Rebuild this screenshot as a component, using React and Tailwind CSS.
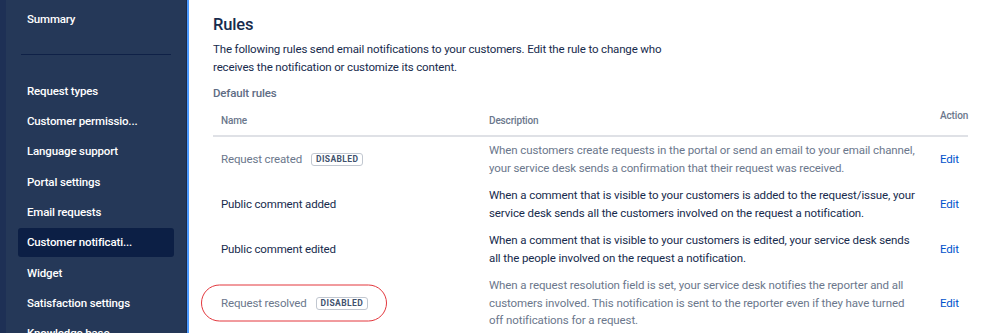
import React from "react";

const navItems = [
  { label: "Request types" },
  { label: "Customer permissio..." },
  { label: "Language support" },
  { label: "Portal settings" },
  { label: "Email requests" },
  { label: "Customer notificati...", active: true },
  { label: "Widget" },
  { label: "Satisfaction settings" },
  { label: "Knowledge base" },
];

const rules = [
  {
    name: "Request created",
    disabled: true,
    desc: "When customers create requests in the portal or send an email to your email channel, your service desk sends a confirmation that their request was received.",
  },
  {
    name: "Public comment added",
    desc: "When a comment that is visible to your customers is added to the request/issue, your service desk sends all the customers involved on the request a notification.",
  },
  {
    name: "Public comment edited",
    desc: "When a comment that is visible to your customers is edited, your service desk sends all the people involved on the request a notification.",
  },
  {
    name: "Request resolved",
    disabled: true,
    circled: true,
    desc: "When a request resolution field is set, your service desk notifies the reporter and all customers involved. This notification is sent to the reporter even if they have turned off notifications for a request.",
  },
];

const Badge = () => (
  <span className="ml-[9px] inline-flex h-[13px] items-center rounded-[3px] border border-[#c1c7d0] px-[4px] text-[8.5px] font-bold leading-none tracking-[0.4px] text-[#42526e]">
    DISABLED
  </span>
);

export default function App() {
  return (
    <div
      className="flex h-[333px] w-[998px] overflow-hidden bg-white tracking-[-0.15px]"
      style={{ fontFamily: 'Roboto, "Liberation Sans", Arial, sans-serif' }}
    >
      {/* Sidebar */}
      <div className="flex h-full shrink-0">
        <div className="w-[6px] bg-[#1e3055]" />
        <div className="w-[180px] bg-[#253858] pt-[10px]">
          <div className="px-[21px] text-[11.5px] font-medium leading-[18px] text-white">Summary</div>
          <div className="mx-[15px] mt-[26px] mb-[22px] h-px bg-[#0f2147]" />
          <div className="flex flex-col gap-[1.3px] px-[12px]">
            {navItems.map((item) => (
              <div
                key={item.label}
                className={`flex h-[29px] shrink-0 items-center rounded-[3px] px-[9px] text-[11.5px] font-medium text-white ${
                  item.active ? "bg-[#0c1f45]" : ""
                }`}
              >
                {item.label}
              </div>
            ))}
          </div>
        </div>
        <div className="w-px bg-[#1a2b4c]" />
        <div className="w-[2px] bg-[#4c9aff]" />
      </div>

      {/* Main */}
      <div className="flex-1 pl-[24px] pr-[38px] pt-[14px]">
        <h1 className="text-[16.5px] font-medium leading-[22px] text-[#172b4d]">Rules</h1>
        <p className="mt-[4px] w-[462px] text-[11.5px] leading-[18px] text-[#172b4d]">
          The following rules send email notifications to your customers. Edit the rule to change who receives the
          notification or customize its content.
        </p>
        <div className="mt-[8px] text-[11.5px] font-medium leading-[18px] text-[#5e6c84]">Default rules</div>

        <div className="mt-[3px]">
          <div className="flex h-[32px] border-b-2 border-[#dfe1e6] text-[10px] font-medium text-[#6b778c]">
            <div className="w-[276px] pl-[8px] pt-[8px]">Name</div>
            <div className="w-[451px] pt-[8px]">Description</div>
            <div className="pt-[3px]">Action</div>
          </div>

          {rules.map((r) => (
            <div key={r.name} className="flex items-center py-[5px]">
              <div
                className={`relative flex w-[276px] items-center pl-[8px] text-[11.5px] ${
                  r.disabled ? "text-[#6b778c]" : "text-[#172b4d]"
                }`}
              >
                <span>{r.name}</span>
                {r.disabled && <Badge />}
                {r.circled && (
                  <div className="pointer-events-none absolute left-[-12px] top-1/2 h-[37px] w-[186px] -translate-y-1/2 rounded-full border-[1.5px] border-[#e3373d]" />
                )}
              </div>
              <div className="w-[451px]">
                <div
                  className={`w-[429px] text-[11.5px] leading-[17.5px] tracking-[-0.1px] ${
                    r.disabled ? "text-[#6b778c]" : "text-[#172b4d]"
                  }`}
                >
                  {r.desc}
                </div>
              </div>
              <div className="text-[11.5px] text-[#0052cc]">Edit</div>
            </div>
          ))}
        </div>
      </div>
    </div>
  );
}
